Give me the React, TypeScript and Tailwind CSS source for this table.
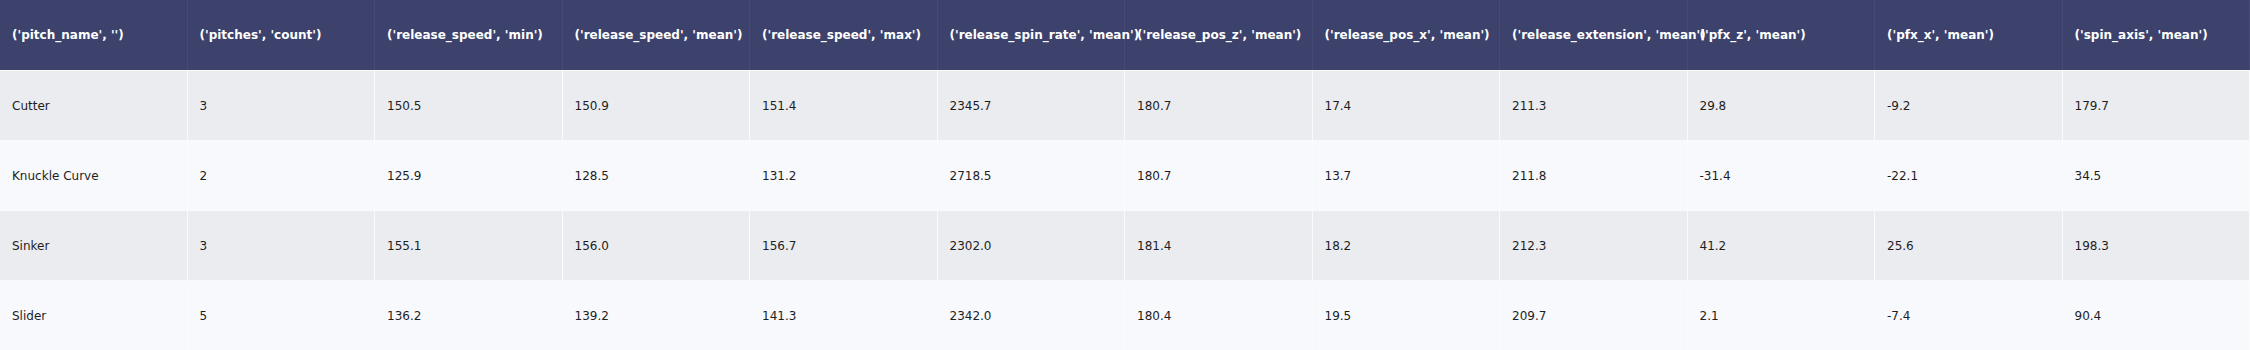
import React from 'react';

const columns = [
  "('pitch_name', '')",
  "('pitches', 'count')",
  "('release_speed', 'min')",
  "('release_speed', 'mean')",
  "('release_speed', 'max')",
  "('release_spin_rate', 'mean')",
  "('release_pos_z', 'mean')",
  "('release_pos_x', 'mean')",
  "('release_extension', 'mean')",
  "('pfx_z', 'mean')",
  "('pfx_x', 'mean')",
  "('spin_axis', 'mean')",
];

const rows = [
  ['Cutter', '3', '150.5', '150.9', '151.4', '2345.7', '180.7', '17.4', '211.3', '29.8', '-9.2', '179.7'],
  ['Knuckle Curve', '2', '125.9', '128.5', '131.2', '2718.5', '180.7', '13.7', '211.8', '-31.4', '-22.1', '34.5'],
  ['Sinker', '3', '155.1', '156.0', '156.7', '2302.0', '181.4', '18.2', '212.3', '41.2', '25.6', '198.3'],
  ['Slider', '5', '136.2', '139.2', '141.3', '2342.0', '180.4', '19.5', '209.7', '2.1', '-7.4', '90.4'],
];

export default function App() {
  return (
    <div className="w-[2250px] h-[350px] overflow-hidden bg-white font-['DejaVu_Sans',Verdana,sans-serif] text-[12px]">
      <div className="grid grid-cols-12">
        {columns.map((c) => (
          <div
            key={c}
            className="h-[70px] flex items-center pl-3 whitespace-nowrap bg-[#3c426c] text-white font-bold border-r border-[#454b74]"
          >
            <span className="relative">{c}</span>
          </div>
        ))}
        {rows.map((row, i) =>
          row.map((v, j) => (
            <div
              key={`${i}-${j}`}
              className={`h-[70px] flex items-center pl-3 whitespace-nowrap text-[#1e1e1e] border-r border-t border-[#fafbfd] ${
                i % 2 === 0 ? 'bg-[#ebecf0]' : 'bg-[#f8f9fc]'
              }`}
            >
              <span className="relative">{v}</span>
            </div>
          ))
        )}
      </div>
    </div>
  );
}
